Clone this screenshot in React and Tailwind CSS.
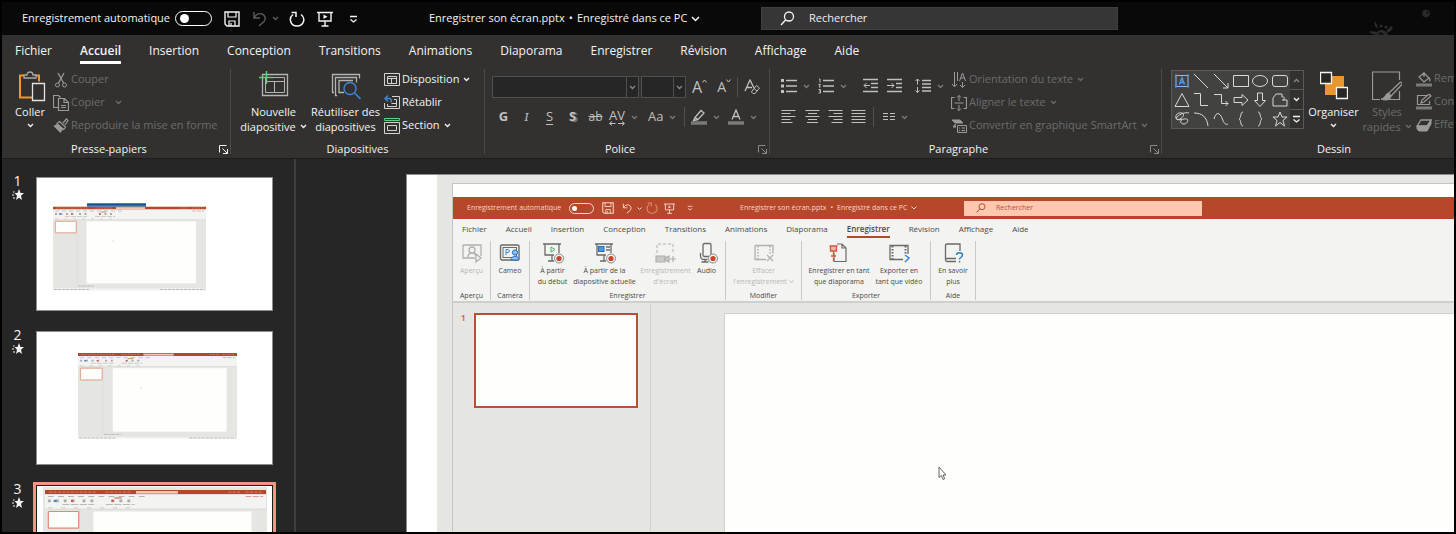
import React, { useState } from 'react';
import clsx from 'clsx';

const TABS = [
  'Fichier', 'Accueil', 'Insertion', 'Conception', 'Transitions', 'Animations',
  'Diaporama', 'Enregistrer', 'Révision', 'Affichage', 'Aide',
];

const Icon = ({ w = 16, h = 16, children, className }) => (
  <svg
    width={w}
    height={h}
    viewBox={`0 0 ${w} ${h}`}
    fill="none"
    stroke="currentColor"
    strokeWidth="1"
    aria-hidden="true"
    className={clsx('shrink-0', className)}
  >
    {children}
  </svg>
);

const Chevron = ({ className }) => (
  <Icon w={7} h={5} className={className}>
    <path d="M1 1l2.500 2.500L6 1" strokeWidth="1.300" />
  </Icon>
);

/* ---------- Quick access icons (shared by both title bars) ---------- */

const SaveIcon = () => (
  <>
    <path d="M1 1h14v14H3l-2-2z" strokeWidth="1.400" />
    <path d="M4 1v5h8V1M5 15v-5h6v5M7 12v3" strokeWidth="1.200" />
  </>
);

const UndoIcon = () => (
  <path d="M2 1v6h6M2 7c2-3.500 5-5 8-4 3.500 1.200 4 5 2 7.500L7 15" strokeWidth="1.400" />
);

const RedoIcon = () => (
  <path d="M2.500 1.500H7v4.500M4 3.500C-.500 7 1 15 8 15s9-8 4-11.500" strokeWidth="1.500" />
);

const PresentIcon = () => (
  <>
    <path d="M0 1.500h16M2 1.500v8.500h12V1.500M8 10v5M4.500 15h7" strokeWidth="1.400" />
    <path d="M6.500 3.500l4 2.200-4 2.200z" fill="currentColor" stroke="none" />
  </>
);

const MoreIcon = () => <path d="M1 1.500h7M1.500 4.500l3 2.500 3-2.500" strokeWidth="1.300" />;

const SearchIcon = () => (
  <>
    <circle cx="9" cy="5.500" r="4.500" strokeWidth="1.300" />
    <path d="M5.800 8.800L1 14" strokeWidth="1.400" />
  </>
);

/* ---------- Ribbon building blocks ---------- */

const Group = ({ label, launcher, dim, className, children }) => (
  <section aria-label={label} className={clsx('flex shrink-0 flex-col', className)}>
    <div className="flex h-19 items-start">{children}</div>
    <div className="flex h-4 items-center text-[11px] leading-4">
      <span className="flex-1 text-center">{label}</span>
      {launcher && (
        <button
          type="button"
          aria-label={`Options ${label}`}
          className={clsx('flex w-3.5 justify-end pr-0.5', dim && 'text-[#8a8a88]')}
        >
          <Icon w={9} h={9}>
            <path d="M.500 7.500v-7h7M3.500 3.500l5 5M8.500 4v4.500H4" />
          </Icon>
        </button>
      )}
    </div>
  </section>
);

const Separator = () => <div className="mt-1 h-[85px] w-px shrink-0 bg-[#4a4a48]" />;
const ShortSeparator = ({ className }) => <div className={clsx('h-5 w-px bg-[#50504e]', className)} />;

const BigButton = ({ icon, lines, arrow, dim, className }) => (
  <button
    type="button"
    className={clsx(
      'flex shrink-0 flex-col items-center pt-1.5 text-[11px] leading-[15px] whitespace-nowrap',
      dim && 'text-[#6c6c6a]',
      className,
    )}
  >
    <span className="mb-px flex h-8 items-start justify-center">{icon}</span>
    {lines.map((line, i) => (
      <span key={line} className="flex items-center gap-1">
        {line}
        {arrow && lines.length > 1 && i === lines.length - 1 && <Chevron />}
      </span>
    ))}
    {arrow && lines.length === 1 && <Chevron className="mt-1" />}
  </button>
);

const RowButton = ({ icon, label, arrow, wide, dim }) => (
  <button
    type="button"
    className={clsx('flex h-[23px] items-center text-[11px] whitespace-nowrap', dim && 'text-[#6c6c6a]')}
  >
    <span className={clsx('mr-0.5 flex w-4', dim ? 'text-[#9a9a98]' : 'text-[#d4d4d2]')}>{icon}</span>
    {label}
    {arrow && <Chevron className={wide ? 'ml-2.5' : 'ml-1'} />}
  </button>
);

const ToolButton = ({ label, arrow, className, children }) => (
  <button type="button" aria-label={label} className={clsx('flex items-center justify-center', className)}>
    {children}
    {arrow && <Chevron className="ml-1.5 text-[#7a7a78]" />}
  </button>
);

const ComboBox = ({ label, className }) => (
  <div className={clsx('relative h-[22px] border border-[#50504e] bg-[#262626]', className)}>
    <select aria-label={label} className="block h-full w-full appearance-none bg-transparent" />
    <span className="pointer-events-none absolute inset-y-0 right-0 flex w-3 items-center justify-center border-l border-[#50504e] text-[#8a8a88]">
      <Chevron />
    </span>
  </div>
);

const Toggle = ({ small }) => (
  <input
    type="checkbox"
    role="switch"
    className={clsx(
      'appearance-none rounded-full before:block before:rounded-full before:bg-white',
      small
        ? 'h-[11px] w-[25px] border border-[#f6d5cb] before:mt-0.5 before:ml-0.5 before:size-[5px]'
        : 'h-[15px] w-[37px] border border-white before:mt-0.5 before:ml-1 before:size-[9px]',
    )}
  />
);

/* ---------- Top bars ---------- */

const TitleBar = () => (
  <header className="relative flex h-[33px] shrink-0 items-center bg-[#090909] text-[11px]">
    <div className="flex w-[427px] shrink-0 items-center pl-5">
      <label className="flex w-[190px] items-center justify-between whitespace-nowrap">
        Enregistrement automatique
        <Toggle />
      </label>
      <button type="button" aria-label="Enregistrer" className="ml-3"><Icon><SaveIcon /></Icon></button>
      <button type="button" aria-label="Annuler" className="ml-3 flex items-center gap-1 text-[#5c5c5c]">
        <Icon><UndoIcon /></Icon>
        <Chevron />
      </button>
      <button type="button" aria-label="Rétablir" className="ml-2.5"><Icon><RedoIcon /></Icon></button>
      <button type="button" aria-label="Diaporama" className="ml-3"><Icon><PresentIcon /></Icon></button>
      <button type="button" aria-label="Personnaliser" className="ml-4"><Icon w={9} h={8}><MoreIcon /></Icon></button>
    </div>
    <button type="button" className="flex w-[332px] shrink-0 items-center gap-1 whitespace-nowrap">
      <span>Enregistrer son écran.pptx</span>
      <span>•</span>
      <span>Enregistré dans ce PC</span>
      <Icon w={9} h={6}><path d="M1 1l3.500 3.500L8 1" strokeWidth="1.500" /></Icon>
    </button>
    <label className="flex h-[23px] max-w-[357px] flex-1 items-center gap-3.5 border border-[#3f3f3f] bg-[#363636] pl-[18px]">
      <Icon w={15} h={15}><SearchIcon /></Icon>
      <input aria-label="Rechercher" placeholder="Rechercher" className="w-full bg-transparent outline-none placeholder:text-[#f0f0f0]" />
    </label>
    {/* Office background decoration */}
    <svg width="66" height="33" viewBox="0 0 66 33" aria-hidden="true" className="absolute top-0 right-0 text-[#2a2a2a]" fill="currentColor">
      <circle cx="38" cy="11.500" r="3.800" />
      <circle cx="39.500" cy="10.500" r="1" fill="#090909" />
    </svg>
    <svg width="26" height="14" viewBox="0 0 26 14" aria-hidden="true" className="absolute right-[59px] bottom-0 text-[#2b2b2b]" fill="currentColor">
      <path d="M7 14c0-6 10-7 12 0z" />
      <path d="M5 0l3 3 1 5-3-3zM1 10l7 1-1 3-6-2zM18 9l4-4 2 1-2 4-4 2z" />
      <circle cx="12" cy="5" r="1.500" />
      <circle cx="17" cy="6" r="1.500" />
      <path d="M9 14c1-4 5-4 6 0" fill="#151515" />
    </svg>
  </header>
);

const TabBar = ({ active, onSelect }) => (
  <nav className="flex h-[30px] items-center gap-7 pl-[13px] text-[12px] leading-5">
    {TABS.map((tab) => (
      <button
        key={tab}
        type="button"
        onClick={() => onSelect(tab)}
        className={clsx('mt-1 border-b-3', tab === active ? 'border-white font-semibold' : 'border-transparent')}
      >
        {tab}
      </button>
    ))}
  </nav>
);

/* ---------- Ribbon groups ---------- */

const ClipboardGroup = () => (
  <Group label="Presse-papiers" launcher className="w-[228px]">
    <BigButton
      className="ml-2.5 w-9"
      arrow
      lines={['Coller']}
      icon={
        <Icon w={28} h={31} className="ml-1">
          <path d="M6 4.500H2v22h12M17 4.500h4v6" stroke="#f0962e" strokeWidth="2" />
          <path d="M6 7V4h3c0-4 6-4 6 0h3v3z" stroke="#a8a8a6" strokeWidth="1.300" fill="#323130" />
          <path d="M14.500 12.500h12v17h-12z" stroke="#e4e4e2" strokeWidth="1.300" fill="#323130" />
        </Icon>
      }
    />
    <div className="ml-[5px] flex flex-col items-start pt-[3px]">
      <RowButton
        dim
        label="Couper"
        icon={
          <Icon>
            <path d="M5 1l5.500 10M11 1L5.500 11" strokeWidth="1.300" />
            <circle cx="4.500" cy="13" r="2" />
            <circle cx="11.500" cy="13" r="2" />
          </Icon>
        }
      />
      <RowButton
        dim
        arrow
        wide
        label="Copier"
        icon={
          <Icon>
            <path d="M5.500 12.500h-5V.500h5l2 2M5.500 3.500h6l4 4v8h-10zM11 3.500v4h4M8 10.500h5M8 12.500h5" strokeWidth="1.200" />
          </Icon>
        }
      />
      <RowButton
        dim
        label="Reproduire la mise en forme"
        icon={
          <Icon>
            <path d="M10 5l3.500-4L15 2.500 12 7M6.500 3.500l6 5.500-2 2.500-6.500-6z" strokeWidth="1.200" />
            <path d="M4 6L.500 8l7 7 2.500-4z" fill="currentColor" stroke="none" />
          </Icon>
        }
      />
    </div>
  </Group>
);

const SlidesGroup = () => (
  <Group label="Diapositives" className="w-[253px]">
    <BigButton
      className="ml-[9px] w-[67px]"
      arrow
      lines={['Nouvelle', 'diapositive']}
      icon={
        <Icon w={32} h={28} className="text-[#b4b4b2]">
          <path d="M4.500 3.500h25v21h-25z" strokeWidth="1.300" />
          <path d="M7.500 6.500h19v15h-19zM7.500 10.500h19M16.500 10.500v11" />
          <path d="M8.500 0v13M1 6.500h14" stroke="#5fd07a" strokeWidth="1.400" />
        </Icon>
      }
    />
    <BigButton
      className="ml-[3px] w-[71px]"
      lines={['Réutiliser des', 'diapositives']}
      icon={
        <Icon w={30} h={30} className="text-[#b4b4b2]">
          <path d="M3 21.500H1.500v-18h27v4M6 24.500H4.500V6.500h21v5M13 21.500H8v-12h14" strokeWidth="1.300" />
          <circle cx="19" cy="17.500" r="6" stroke="#3b87d8" strokeWidth="1.400" />
          <path d="M23.500 22l6 6" stroke="#3b87d8" strokeWidth="1.600" />
        </Icon>
      }
    />
    <div className="ml-[3px] flex flex-col items-start pt-[3px]">
      <RowButton
        arrow
        label="Disposition"
        icon={
          <Icon>
            <path d="M.500 1.500h15v12H.500zM3.500 4.500h9v7h-9zM3.500 6.500h9M7.500 6.500v5" />
          </Icon>
        }
      />
      <RowButton
        label="Rétablir"
        icon={
          <Icon>
            <path d="M8 1.500h7.500v12H.500V8M10 4.500h2.500v7h-9V9M7.500 8.500h5" />
            <path d="M4 .500L1 3.500l3 3M1 3.500h4c2 0 3 1.500 2 4" stroke="#3b87d8" strokeWidth="1.400" />
          </Icon>
        }
      />
      <RowButton
        arrow
        label="Section"
        icon={
          <Icon>
            <path d="M.500.500h15v2H.500z" stroke="#5fd07a" />
            <path d="M.500 4.500h15v11H.500zM3.500 7.500h9v5h-9z" />
          </Icon>
        }
      />
    </div>
  </Group>
);

const FontGroup = () => (
  <Group label="Police" launcher dim className="w-[284px]">
    <div className="flex flex-col pl-[7px] text-[#c0c0be]">
      <div className="mt-[11px] flex h-[22px] items-center">
        <ComboBox label="Police" className="w-[147px]" />
        <ComboBox label="Taille de police" className="ml-0.5 w-[45px]" />
        <ToolButton label="Agrandir la police" className="ml-1.5 items-start text-[16px] leading-5">
          A<Icon w={5} h={4} className="mt-0.5"><path d="M.500 3.500l2-2.500 2 2.500" /></Icon>
        </ToolButton>
        <ToolButton label="Réduire la police" className="ml-2.5 items-start text-[14px] leading-5">
          A<Icon w={5} h={4} className="mt-0.5"><path d="M.500.500l2 2.500 2-2.500" /></Icon>
        </ToolButton>
        <ShortSeparator className="ml-1.5" />
        <ToolButton label="Effacer la mise en forme" className="ml-1.5">
          <Icon>
            <path d="M1 12L6 1l4 8M2.800 8.500H8" strokeWidth="1.300" />
            <path d="M8 12l4.500-5.500L15.500 9 11 14.500H9L7.500 13z" />
            <path d="M10 9.500l3 2.500" />
          </Icon>
        </ToolButton>
      </div>
      <div className="mt-2 flex h-[22px] items-center text-[13px]">
        <ToolButton label="Gras" className="w-[23px] font-bold">G</ToolButton>
        <ToolButton label="Italique" className="w-[23px] font-serif italic">I</ToolButton>
        <ToolButton label="Souligné" className="w-[23px] underline underline-offset-3">S</ToolButton>
        <ToolButton label="Ombre" className="w-[23px] font-bold text-shadow-[2px_1px_1px_#777]">S</ToolButton>
        <ToolButton label="Barré" className="w-[23px] text-[12px] line-through">ab</ToolButton>
        <ToolButton label="Espacement" arrow className="ml-0.5">
          <span className="flex flex-col items-center leading-3">
            AV
            <Icon w={16} h={5}><path d="M3 .500L.500 2.500 3 4.500M13 .500l2.500 2-2.500 2M.500 2.500h6M9 2.500h6" /></Icon>
          </span>
        </ToolButton>
        <ToolButton label="Modifier la casse" arrow className="ml-2.5">Aa</ToolButton>
        <ShortSeparator className="ml-2" />
        <ToolButton label="Surlignage" arrow className="ml-1.5">
          <Icon>
            <path d="M4 8.500l6-7 3 2.500-6 6.500zM4 8.500L2.500 11.500 7 10.500" strokeWidth="1.300" />
            <path d="M0 14h16" stroke="#7a7a78" strokeWidth="3.500" />
          </Icon>
        </ToolButton>
        <ToolButton label="Couleur de police" arrow className="ml-2">
          <Icon>
            <path d="M4 10.500L8 1l4 9.500M5.500 7.500h5" strokeWidth="1.300" />
            <path d="M0 14h16" stroke="#7a7a78" strokeWidth="3.500" />
          </Icon>
        </ToolButton>
      </div>
    </div>
  </Group>
);

const ParagraphGroup = () => (
  <Group label="Paragraphe" launcher dim className="w-[391px]">
    <div className="flex w-[172px] flex-col pl-[11px] text-[#c0c0be]">
      <div className="mt-2.5 flex h-[22px] items-center">
        <ToolButton label="Puces" arrow>
          <Icon>
            <path d="M5 2.500h11M5 8h11M5 13.500h11" strokeWidth="1.400" />
            <path d="M0 2.500h3M0 8h3M0 13.500h3" strokeWidth="3" />
          </Icon>
        </ToolButton>
        <ToolButton label="Numérotation" arrow className="ml-2">
          <Icon>
            <path d="M5 2.500h11M5 8h11M5 13.500h11" strokeWidth="1.400" />
            <path d="M1 1h1v3.500M.500 6.500h2L1 9h1.500M.500 11.500h2v1.500h-1 1v2h-2" />
          </Icon>
        </ToolButton>
        <ShortSeparator className="ml-2.5" />
        <ToolButton label="Réduire le retrait" className="ml-1.5">
          <Icon>
            <path d="M0 1.500h15M8 5.500h7M8 9.500h7M0 13.500h15" strokeWidth="1.300" />
            <path d="M7 7.500H1M3.500 5L1 7.500 3.500 10" />
          </Icon>
        </ToolButton>
        <ToolButton label="Augmenter le retrait" className="ml-2">
          <Icon>
            <path d="M0 1.500h15M9 5.500h6M9 9.500h6M0 13.500h15" strokeWidth="1.300" />
            <path d="M0 7.500h7M4.500 5L7 7.500 4.500 10" />
          </Icon>
        </ToolButton>
        <ShortSeparator className="ml-1.5" />
        <ToolButton label="Interligne" arrow className="ml-1.5">
          <Icon>
            <path d="M7 2.500h9M7 6h9M7 9.500h9M7 13h9" strokeWidth="1.300" />
            <path d="M2.500 1v5.500M.500 3l2-2 2 2M2.500 9v5.500M.500 12.500l2 2 2-2" />
          </Icon>
        </ToolButton>
      </div>
      <div className="mt-[9px] flex h-[22px] items-center">
        <ToolButton label="Aligner à gauche">
          <Icon><path d="M.500 1.500h14M.500 4.500h9M.500 7.500h14M.500 10.500h9M.500 13.500h11" strokeWidth="1.200" /></Icon>
        </ToolButton>
        <ToolButton label="Centrer" className="ml-2">
          <Icon><path d="M.500 1.500h14M3 4.500h9M.500 7.500h14M3 10.500h9M2 13.500h11" strokeWidth="1.200" /></Icon>
        </ToolButton>
        <ToolButton label="Aligner à droite" className="ml-[7px]">
          <Icon><path d="M.500 1.500h14M5.500 4.500h9M.500 7.500h14M5.500 10.500h9M3.500 13.500h11" strokeWidth="1.200" /></Icon>
        </ToolButton>
        <ToolButton label="Justifier" className="ml-[7px]">
          <Icon><path d="M.500 1.500h14M.500 4.500h14M.500 7.500h14M.500 10.500h14M.500 13.500h14" strokeWidth="1.200" /></Icon>
        </ToolButton>
        <ShortSeparator className="ml-1.5" />
        <ToolButton label="Colonnes" arrow className="ml-2">
          <Icon w={13}><path d="M1 4.500h5M1 7.500h5M1 10.500h5M8 4.500h5M8 7.500h5M8 10.500h5" /></Icon>
        </ToolButton>
      </div>
    </div>
    <div className="ml-[9px] flex flex-col items-start pt-[3px]">
      <RowButton
        dim
        arrow
        label="Orientation du texte"
        icon={
          <Icon>
            <path d="M3.500 0v14M1 12l2.500 3L6 12M11.500 10v5M9 13l2.500 2.500L14 13M8.500 9L11.500 1l3 8M9.500 6h4" />
            <path d="M6.500 0v9" />
          </Icon>
        }
      />
      <RowButton
        dim
        arrow
        label="Aligner le texte"
        icon={
          <Icon>
            <path d="M3.500 2.500h-3v11h3M12.500 2.500h3v11h-3M3.500 8h9" strokeWidth="1.200" />
            <path d="M8 .500v5.500M6 2.500l2-2 2 2M8 10v5.500M6 13.500l2 2 2-2" />
          </Icon>
        }
      />
      <RowButton
        dim
        arrow
        label="Convertir en graphique SmartArt"
        icon={
          <Icon>
            <path d="M1 2h8l3 3H4L1 2zM5 9H2l2.500-3" fill="currentColor" />
            <path d="M6.500 7.500h9v7h-9zM8 10h1M10.500 10H14M8 12.500h1M10.500 12.500H14" />
          </Icon>
        }
      />
    </div>
  </Group>
);

const SHAPES = [
  <>
    <path d="M2 2.500h12v11H2z" stroke="#8cbcf0" />
    <path d="M5.500 11.500L8 5l2.500 6.500M6.200 9.500h3.600" stroke="#4a98e8" strokeWidth="1.600" />
    <path d="M1 2.500h2M13 2.500h2M1 13.500h2M13 13.500h2" stroke="#4a98e8" strokeWidth="2" />
  </>,
  <path d="M1 1l14 14" />,
  <path d="M1 1l14 14M15 10v5h-5" />,
  <path d="M.500 2.500h15v11H.500z" />,
  <ellipse cx="8" cy="8" rx="7.500" ry="5.500" />,
  <rect x=".500" y="2.500" width="15" height="11" rx="2.500" />,
  <path d="M8 1.500l7 13H1z" />,
  <path d="M1 1.500h6.500v12H15" />,
  <path d="M1 2.500h7.500v9H15M12.500 9l2.500 2.500-2.500 2.500" />,
  <path d="M1 5.500h8V2.500l6 5.500-6 5.500v-3H1z" />,
  <path d="M5.500 1v7.500H2.500l5.500 6 5.500-6h-3V1z" />,
  <path d="M4 2h6v3c3-1 3 3 .500 3H15v6H1V6z" />,
  <path d="M15 2c-4-1-9 1-12 4-2 2 0 3 3 2 3-1.500 5-5 2-6-4-1-7 2-6 5 1 4 8 0 11 1 2 1 0 5-3 5s-5-3-2-4" />,
  <path d="M1 2c8 0 13 4 14 13" />,
  <path d="M1 8c2-8 6-6 8-1 2 6 4 7 6 6" />,
  <path d="M10 1C7 1 8.500 7 6 8c2.500 1 1 7 4 7" />,
  <path d="M6 1c3 0 1.500 6 4 7-2.500 1-1 7-4 7" />,
  <path d="M8 1l2 5h5l-4 3.500 1.500 5.500L8 11.500 3.500 15 5 9.500 1 6h5z" />,
];

const DrawingGroup = () => (
  <Group label="Dessin" className="w-[344px]">
    <div className="mt-[5px] ml-[9px] flex border border-[#5a5a58]">
      <div className="grid w-[118px] grid-cols-6 bg-[#424240] text-[#d8d8d6]">
        {SHAPES.map((shape, i) => (
          <button key={i} type="button" aria-label={`Forme ${i + 1}`} className="flex h-[19px] items-center justify-center">
            <Icon>{shape}</Icon>
          </button>
        ))}
      </div>
      <div className="flex w-[13px] flex-col divide-y divide-[#5a5a58] bg-[#323130]">
        <button type="button" aria-label="Précédent" className="flex flex-1 items-center justify-center text-[#8a8a88]">
          <Chevron className="rotate-180" />
        </button>
        <button type="button" aria-label="Suivant" className="flex flex-1 items-center justify-center"><Chevron /></button>
        <button type="button" aria-label="Plus de formes" className="flex flex-1 items-center justify-center">
          <Icon w={9} h={8}><MoreIcon /></Icon>
        </button>
      </div>
    </div>
    <BigButton
      className="ml-[3px] w-[53px]"
      arrow
      lines={['Organiser']}
      icon={
        <Icon w={28} h={30}>
          <path d="M5 5h19v19H5z" fill="#e8962e" stroke="none" />
          <path d="M.500 1.500h11v11H.500zM16.500 16.500h11v11h-11z" fill="#262626" strokeWidth="1.300" />
        </Icon>
      }
    />
    <BigButton
      className="ml-1 w-[46px]"
      dim
      arrow
      lines={['Styles', 'rapides']}
      icon={
        <Icon w={30} h={30} className="text-[#9a9a98]">
          <path d="M8 28.500H.500V1h27v8M27.500 20v8.500H16" strokeWidth="1.200" />
          <path d="M28.500 11L17 22M29.500 14L19 25M28.500 11c1 0 2 1 1 3" strokeWidth="1.200" />
          <path d="M17 22c-4 0-3 5-8 6 4 2 10 1 10-3z" fill="currentColor" />
        </Icon>
      }
    />
    <div className="ml-1.5 flex flex-col items-start pt-0.5">
      <RowButton
        dim
        label="Remplissage"
        icon={
          <Icon>
            <path d="M3 6l5-4 5 5-5 4zM8 6V1M13 7c1 1 1.500 3 0 3" strokeWidth="1.200" />
            <path d="M0 14h16" stroke="#7a7a78" strokeWidth="3" />
          </Icon>
        }
      />
      <RowButton
        dim
        label="Contour"
        icon={
          <Icon>
            <path d="M11 1.500H1.500v9h12V7M5 9l1-3 7-6 2 2-7 6z" strokeWidth="1.200" />
            <path d="M0 14h16" stroke="#7a7a78" strokeWidth="3" />
          </Icon>
        }
      />
      <RowButton
        dim
        label="Effets"
        icon={
          <Icon>
            <path d="M1 9l4-6h10l-4 6z" strokeWidth="1.300" />
            <path d="M1 9v3l2 2h8V9zM11 9l4-6v4l-4 7z" fill="currentColor" />
          </Icon>
        }
      />
    </div>
  </Group>
);

/* ---------- Slide thumbnails ---------- */

// Reduced picture of the PowerPoint window placed on each slide
const MiniShot = (props) => (
  <svg viewBox="0 0 153 84" preserveAspectRatio="none" {...props}>
    <rect width="153" height="84" fill="#e5e6e2" />
    <rect width="153" height="3" fill="#b7472a" />
    <path d="M3 1.500h32M42 1.500h18M127 1.500h8M139 1.500h12" stroke="#dc9a86" strokeWidth=".500" strokeDasharray="2 1" />
    <rect x="63" y=".700" width="29" height="1.800" fill="#fbc5b0" />
    <rect y="3" width="153" height="10" fill="#f3f3f1" />
    <path d="M2 4.500h69" stroke="#aaa" strokeWidth=".600" strokeDasharray="4 3" />
    <path d="M48 5.500h5" stroke="#b7472a" strokeWidth=".600" />
    <path d="M139 4.500h12" stroke="#d88" strokeWidth=".600" strokeDasharray="4 1" />
    <path d="M2 7.500h20M26 7.500h10M46 7.500h16" stroke="#aaa" strokeWidth="1.800" strokeDasharray="2 3.500" />
    <path d="M6 7.500h2" stroke="#3b87d8" strokeWidth="1.500" />
    <path d="M18 7.500h1.500M46 7.500h1.500" stroke="#d4573c" strokeWidth="1.500" />
    <path d="M12 10h22M42 10h20" stroke="#bbb" strokeWidth=".700" strokeDasharray="5 1" />
    <path d="M2 12.300h61" stroke="#bbb" strokeWidth=".500" strokeDasharray="3 6" />
    <path d="M0 13.200h153M24 13v66" stroke="#d0d0cc" strokeWidth=".400" />
    <rect x="2.300" y="14.800" width="21" height="11.500" rx=".500" fill="#fefefb" stroke="#e08a75" strokeWidth=".800" />
    <rect x="33.500" y="14.800" width="109.500" height="62" fill="#fefefb" />
    <path d="M60 34l1 1" stroke="#999" strokeWidth=".700" />
    <path d="M25 79.500h16" stroke="#aaa" strokeWidth=".700" strokeDasharray="2 .5" />
    <rect y="82" width="153" height="2" fill="#f3f3f1" />
    <path d="M1 83h35M107 83h45" stroke="#999" strokeWidth=".600" strokeDasharray="3 1" />
  </svg>
);

const Thumbnail = ({ number, selected, children }) => (
  <li className="flex">
    <div className="flex w-[31px] shrink-0 flex-col items-center text-[14px] leading-4">
      <span className="-mt-1">{number}</span>
      <svg width="12" height="12" viewBox="0 0 12 12" fill="currentColor" aria-hidden="true">
        <path d="M7 0l1.500 4H12L9 6.800 10 11 7 8.700 4 11l1-4.200L2.500 4H5.500z" />
        <path d="M1 2.500h1.500v1H1zM0 5.500h2v1H0zM1 8.500h2v1H1z" />
      </svg>
    </div>
    <button
      type="button"
      aria-label={`Diapositive ${number}`}
      className={clsx(
        'ml-[3px] h-[134px] w-[237px] border bg-white',
        selected ? 'border-[#1c1c1c] ring-3 ring-[#f0957f]' : 'border-[#8c8c8c]',
      )}
    >
      <svg width="235" height="132" viewBox="0 0 235 132" className="block" aria-hidden="true">
        {children}
      </svg>
    </button>
  </li>
);

const ThumbnailPane = () => (
  <aside className="w-[294px] shrink-0 overflow-hidden border-r-2 border-[#3e3e3e] pt-[18px]">
    <ol className="flex flex-col gap-5">
      <Thumbnail number={1}>
        <rect x="50" y="25.500" width="59" height="4" fill="#2472c4" />
        <rect x="50" y="25.500" width="59" height="1.500" fill="#1b4f8c" />
        <MiniShot x="16" y="28.500" width="153" height="84" />
      </Thumbnail>
      <Thumbnail number={2}>
        <MiniShot x="41" y="21" width="159" height="86" />
      </Thumbnail>
      <Thumbnail number={3} selected>
        <rect x="6" y="1" width="224" height="131" fill="#e5e6e2" />
        <MiniShot x="8" y="4" width="221" height="122" />
      </Thumbnail>
    </ol>
  </aside>
);

/* ---------- Window shown on the current slide ---------- */

const ShotGroup = ({ label, className, children }) => (
  <section aria-label={label} className={clsx('flex shrink-0 flex-col border-r border-[#c8c8c5]', className)}>
    <div className="flex h-[51px] items-start justify-center pt-px">{children}</div>
    <div className="text-center text-[7px] leading-2">{label}</div>
  </section>
);

const ShotButton = ({ icon, lines, dim, arrow, className }) => (
  <button
    type="button"
    className={clsx('flex shrink-0 flex-col items-center text-[7px] leading-[11px] whitespace-nowrap', dim && 'text-[#b8b8b5]', className)}
  >
    <Icon w={22} h={22} className={clsx('mb-px', dim ? 'text-[#b0b0ad]' : 'text-[#6a6a68]')}>
      {icon}
    </Icon>
    {lines.map((line, i) => (
      <span key={line} className="flex items-center gap-0.5">
        {line}
        {arrow && i === lines.length - 1 && <Icon w={5} h={3}><path d="M.500.500l2 2 2-2" /></Icon>}
      </span>
    ))}
  </button>
);

const RecordDot = () => (
  <>
    <circle cx="17" cy="16.500" r="4.500" fill="#f3f3f1" stroke="#888" />
    <circle cx="17" cy="16.500" r="2.600" fill="#c8432b" stroke="none" />
  </>
);

const SlideShot = () => (
  <div className="flex h-full flex-col border-t border-l border-[#c4c4c1] bg-[#e5e6e2] text-[#4a4a48]">
    <div className="h-[13px] shrink-0 bg-[#fefefc]" />
    <div className="flex h-[22px] shrink-0 items-center bg-[#b7472a] text-[7px] text-[#f6d5cb]">
      <div className="flex w-[287px] shrink-0 items-center pl-3.5">
        <label className="flex w-[127px] items-center justify-between whitespace-nowrap">
          Enregistrement automatique
          <Toggle small />
        </label>
        <button type="button" aria-label="Enregistrer" className="ml-2">
          <svg width="12" height="12" viewBox="0 0 16 16" fill="none" stroke="currentColor"><SaveIcon /></svg>
        </button>
        <button type="button" aria-label="Annuler" className="ml-2 flex items-center gap-1">
          <svg width="11" height="11" viewBox="0 0 16 16" fill="none" stroke="currentColor"><UndoIcon /></svg>
          <Icon w={5} h={3}><path d="M.500.500l2 2 2-2" /></Icon>
        </button>
        <button type="button" aria-label="Rétablir" className="ml-1 text-[#d98b74]">
          <svg width="12" height="12" viewBox="0 0 16 16" fill="none" stroke="currentColor"><RedoIcon /></svg>
        </button>
        <button type="button" aria-label="Diaporama" className="ml-1.5">
          <svg width="11" height="11" viewBox="0 0 16 16" fill="none" stroke="currentColor"><PresentIcon /></svg>
        </button>
        <button type="button" aria-label="Personnaliser" className="ml-3">
          <svg width="6" height="6" viewBox="0 0 9 8" fill="none" stroke="currentColor"><MoreIcon /></svg>
        </button>
      </div>
      <button type="button" className="flex w-[224px] shrink-0 items-center gap-1 whitespace-nowrap">
        <span>Enregistrer son écran.pptx</span>
        <span>•</span>
        <span>Enregistré dans ce PC</span>
        <Icon w={6} h={4}><path d="M.500.500L3 3 5.500.500" /></Icon>
      </button>
      <label className="flex h-[15px] max-w-[238px] flex-1 items-center gap-2.5 bg-[#fec8b0] pl-3 text-[#a5402a]">
        <svg width="10" height="10" viewBox="0 0 15 15" fill="none" stroke="currentColor" className="shrink-0"><SearchIcon /></svg>
        <input aria-label="Rechercher" placeholder="Rechercher" className="w-full bg-transparent outline-none placeholder:text-[#b0503a]" />
      </label>
    </div>
    <nav className="flex h-[21px] shrink-0 items-center gap-[19px] bg-[#f3f3f1] pl-[9px] text-[8px]">
      {TABS.map((tab) => (
        <button
          key={tab}
          type="button"
          className={clsx('h-4 border-b-2', tab === 'Enregistrer' ? 'border-[#b7472a] font-semibold' : 'border-transparent')}
        >
          {tab}
        </button>
      ))}
    </nav>
    <div className="flex h-[63px] shrink-0 border-b-2 border-[#cfd0cc] bg-[#f3f3f1] pt-px pb-px">
      <ShotGroup label="Aperçu" className="w-[38px]">
        <ShotButton
          dim
          lines={['Aperçu']}
          icon={<path d="M2 3h18v11M2 3v13h12M7 15c0-5 7-5 8-1M8 8a3 3 0 106 0 3 3 0 10-6 0M15 12l5 4-5 4z" strokeWidth="1.300" />}
        />
      </ShotGroup>
      <ShotGroup label="Caméra" className="w-[39px]">
        <ShotButton
          lines={['Cameo']}
          icon={
            <>
              <rect x="1.500" y="3" width="18.500" height="15" rx="1.500" strokeWidth="1.400" />
              <rect x="4" y="5.500" width="13.500" height="10" />
              <path d="M7 13V7.500h2c2 0 2 3 0 3H7" stroke="#3b87d8" />
              <circle cx="16" cy="10.500" r="2.600" stroke="#1f6fc0" fill="#8cbcf0" />
              <path d="M12 18c0-5 8-5 8 0z" stroke="#1f6fc0" fill="#8cbcf0" />
            </>
          }
        />
      </ShotGroup>
      <ShotGroup label="Enregistrer" className="w-[196px]">
        <ShotButton
          className="w-9"
          lines={['À partir', 'du début']}
          icon={
            <>
              <path d="M1 2h18M3 2v11h9M17 2v9M10 13v6M6 19h6" strokeWidth="1.300" />
              <path d="M9 5l4 2.500L9 10z" stroke="#3db56a" />
              <RecordDot />
            </>
          }
        />
        <ShotButton
          className="w-[68px]"
          lines={['À partir de la', 'diapositive actuelle']}
          icon={
            <>
              <path d="M1 2h18M3 2v11h9M17 2v9M10 13v6M6 19h6M12 5h4M12 8h4" strokeWidth="1.300" />
              <rect x="4.500" y="4.500" width="5.500" height="5" fill="#4a98e8" stroke="#1f6fc0" />
              <RecordDot />
            </>
          }
        />
        <ShotButton
          dim
          className="w-[54px]"
          lines={['Enregistrement', "d'écran"]}
          icon={
            <>
              <path d="M2 11V2h16v10" strokeDasharray="3 2" />
              <path d="M1 14h9v6H1zM10 16l4-2v6l-4-2M15 17h6M18 14v6" fill="#c8c8c5" strokeWidth="1.200" />
            </>
          }
        />
        <ShotButton
          className="w-7"
          lines={['Audio']}
          icon={
            <>
              <rect x="7" y="1.500" width="8" height="13" rx="1.500" strokeWidth="1.300" />
              <path d="M4.500 11v3c0 2 1 3.500 4 3.500h3M9 17.500V20M5.500 20h7" strokeWidth="1.300" />
              <RecordDot />
            </>
          }
        />
      </ShotGroup>
      <ShotGroup label="Modifier" className="w-[76px]">
        <ShotButton
          dim
          arrow
          lines={['Effacer', "l'enregistrement"]}
          icon={
            <>
              <path d="M2 3.500h18v8M2 3.500v14h11" strokeWidth="1.300" />
              <path d="M5 4v13M17 4v8" strokeDasharray="1.500 1.500" strokeWidth="1.500" />
              <path d="M14 13l6 6M20 13l-6 6" strokeWidth="1.300" />
            </>
          }
        />
      </ShotGroup>
      <ShotGroup label="Exporter" className="w-[129px]">
        <ShotButton
          className="w-[66px]"
          lines={['Enregistrer en tant', 'que diaporama']}
          icon={
            <>
              <path d="M6 11v8.500h12V6l-4-4H9M14 2v4h4" strokeWidth="1.200" />
              <path d="M1.500 4h8M2.500 4v5h6V4M5.500 9v5M3 14h5M5.500 16v3" fill="#f3b5a5" stroke="#d4573c" strokeWidth="1.300" />
            </>
          }
        />
        <ShotButton
          className="w-[54px]"
          lines={['Exporter en', 'tant que vidéo']}
          icon={
            <>
              <path d="M20 12V3.500H2v14h13" strokeWidth="1.300" />
              <path d="M4.500 4v13M17.500 4v9" strokeDasharray="1.500 1.500" strokeWidth="2" />
              <path d="M17 13l4 3-4 4" stroke="#3b87d8" strokeWidth="1.500" />
            </>
          }
        />
      </ShotGroup>
      <ShotGroup label="Aide" className="w-[45px]">
        <ShotButton
          lines={['En savoir', 'plus']}
          icon={
            <>
              <path d="M18 9V2H5c-1 0-1.500.500-1.500 1.500v14c0 1 .500 2 1.500 2h9M4 16.500h10" strokeWidth="1.300" />
              <path d="M14.500 13c0-3 6-3 6 0 0 2.500-3 2-3 4.500M17.500 19v1.500" stroke="#2f7fc4" strokeWidth="1.500" />
            </>
          }
        />
      </ShotGroup>
    </div>
    <div className="flex min-h-0 flex-1">
      <div className="flex w-[198px] shrink-0 gap-2 border-r border-[#d3d4d0] pt-2.5 pl-2">
        <span className="text-[8px] leading-[10px] font-bold text-[#e0664b]">1</span>
        <button type="button" aria-label="Diapositive 1" className="h-[95px] w-[164px] border-2 border-[#bb4f36] bg-[#fefefc]" />
      </div>
      <div className="flex-1 pt-2.5 pl-[73px]">
        <div className="relative h-full border-t border-l border-[#d0d1cd] bg-[#fefefc]">
          <svg width="9" height="15" viewBox="0 0 9 15" aria-hidden="true" className="absolute top-[152px] left-[213px]">
            <path d="M1 1v10.500l2.300-2L5 13.500l1.700-.800L5 9h3z" fill="#fff" stroke="#555" strokeWidth=".900" />
          </svg>
        </div>
      </div>
    </div>
  </div>
);

const App = () => {
  const [activeTab, setActiveTab] = useState('Accueil');

  return (
    <div className="flex h-screen flex-col overflow-hidden border-2 border-black bg-[#262626] font-['Open_Sans','Noto_Sans',sans-serif] text-[#f4f4f4]">
      <TitleBar />
      <div className="shrink-0 overflow-hidden bg-[#323130]">
        <TabBar active={activeTab} onSelect={setActiveTab} />
        <div className="flex h-[93px]">
          <ClipboardGroup />
          <Separator />
          <SlidesGroup />
          <Separator />
          <FontGroup />
          <Separator />
          <ParagraphGroup />
          <Separator />
          <DrawingGroup />
        </div>
      </div>
      <div className="flex min-h-0 flex-1 border-t border-[#1c1c1c]">
        <ThumbnailPane />
        <main className="flex min-w-0 flex-1 pt-[15px] pl-[110px]">
          <div className="flex-1 overflow-hidden border-t border-l border-[#8c8c8c] bg-white pl-[30px]">
            <div className="h-full bg-[#e5e6e2] pt-2 pl-[15px]">
              <SlideShot />
            </div>
          </div>
        </main>
      </div>
    </div>
  );
};

export default App;
